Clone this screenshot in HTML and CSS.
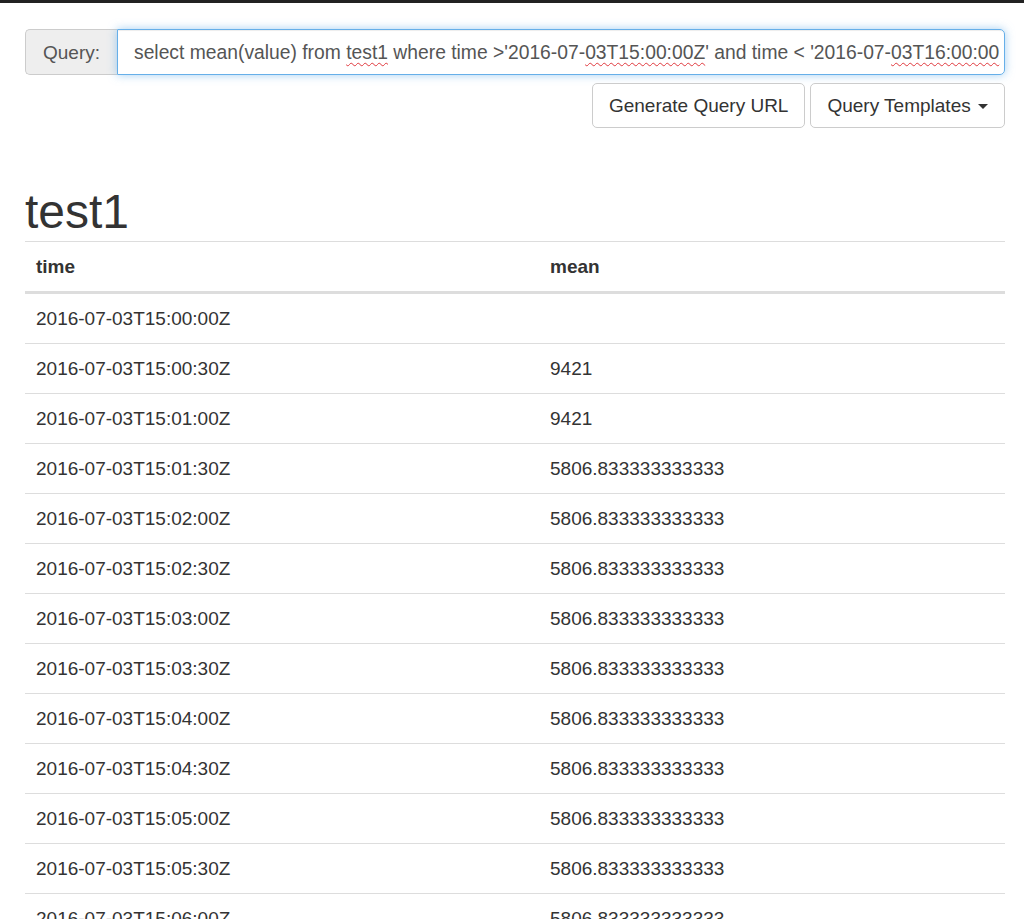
FILE: index.html
```html
<!DOCTYPE html>
<html>
<head>
<meta charset="utf-8">
<link rel="stylesheet" href="styles.css">
</head>
<body>
<div class="topbar"></div>
<div class="container">
  <div class="input-group">
    <span class="addon">Query:</span>
    <div class="query-input"><span class="query-text">select mean(value) from <span class="sp">test1</span> where time &gt;'2016-07-<span class="sp">03T15:00:00Z</span>' and time &lt; '2016-07-<span class="sp">03T16:00:00</span></span></div>
  </div>
  <div class="actions">
    <button class="btn">Generate Query URL</button>
    <button class="btn">Query Templates <span class="caret"></span></button>
  </div>
  <h1 class="title">test1</h1>
  <table class="table">
    <thead>
      <tr><th class="col-time">time</th><th>mean</th></tr>
    </thead>
    <tbody>
      <tr><td>2016-07-03T15:00:00Z</td><td></td></tr>
      <tr><td>2016-07-03T15:00:30Z</td><td>9421</td></tr>
      <tr><td>2016-07-03T15:01:00Z</td><td>9421</td></tr>
      <tr><td>2016-07-03T15:01:30Z</td><td>5806.833333333333</td></tr>
      <tr><td>2016-07-03T15:02:00Z</td><td>5806.833333333333</td></tr>
      <tr><td>2016-07-03T15:02:30Z</td><td>5806.833333333333</td></tr>
      <tr><td>2016-07-03T15:03:00Z</td><td>5806.833333333333</td></tr>
      <tr><td>2016-07-03T15:03:30Z</td><td>5806.833333333333</td></tr>
      <tr><td>2016-07-03T15:04:00Z</td><td>5806.833333333333</td></tr>
      <tr><td>2016-07-03T15:04:30Z</td><td>5806.833333333333</td></tr>
      <tr><td>2016-07-03T15:05:00Z</td><td>5806.833333333333</td></tr>
      <tr><td>2016-07-03T15:05:30Z</td><td>5806.833333333333</td></tr>
      <tr><td>2016-07-03T15:06:00Z</td><td>5806.833333333333</td></tr>
    </tbody>
  </table>
</div>
</body>
</html>
```
FILE: styles.css
```css
html, body {
  margin: 0;
  padding: 0;
  background: #fff;
  overflow: hidden;
}
body {
  font-family: "Liberation Sans", Arial, sans-serif;
  font-size: 19px;
  color: #333;
}
.topbar {
  height: 3px;
  background: #222;
}
.container {
  width: 980px;
  margin-left: 25px;
}
.input-group {
  display: flex;
  margin-top: 26px;
  height: 46px;
}
.addon {
  box-sizing: border-box;
  width: 92px;
  display: flex;
  align-items: center;
  justify-content: center;
  padding-top: 2px;
  background: #eee;
  border: 1px solid #ccc;
  border-right: 0;
  border-radius: 5px 0 0 5px;
  color: #555;
}
.query-input {
  box-sizing: border-box;
  flex: 1;
  display: flex;
  align-items: center;
  padding-left: 16px;
  padding-top: 2px;
  white-space: nowrap;
  overflow: hidden;
  border: 1px solid #66afe9;
  border-radius: 0 5px 5px 0;
  box-shadow: inset 0 1px 1px rgba(0,0,0,.075), 0 0 10px rgba(102,175,233,.6);
  color: #555;
}
.query-text {
  font-size: 19.3px;
  white-space: pre;
}
.sp {
  text-decoration: underline wavy #e0393e;
  text-decoration-thickness: 1px;
  text-underline-offset: 3px;
}
.actions {
  display: flex;
  justify-content: flex-end;
  gap: 5px;
  margin-top: 8px;
}
.btn {
  box-sizing: border-box;
  height: 45px;
  padding: 0 16px;
  font-family: inherit;
  font-size: 19px;
  color: #333;
  background: #fff;
  border: 1px solid #ccc;
  border-radius: 5px;
}
.caret {
  display: inline-block;
  width: 0;
  height: 0;
  margin-left: 2px;
  vertical-align: middle;
  border-top: 5px solid #333;
  border-left: 5px solid transparent;
  border-right: 5px solid transparent;
}
.title {
  margin: 57px 0 3px;
  font-size: 48px;
  font-weight: 500;
  line-height: 53px;
  color: #333;
}
.table {
  width: 100%;
  border-collapse: collapse;
  border-spacing: 0;
}
.table th, .table td {
  text-align: left;
  padding: 11px;
  line-height: 27px;
  border-top: 1px solid #ddd;
  vertical-align: top;
}
.table th {
  font-weight: bold;
  border-bottom: 3px solid #ddd;
}
.col-time {
  width: 492px;
}
.table td {
  height: 27px;
}
```
